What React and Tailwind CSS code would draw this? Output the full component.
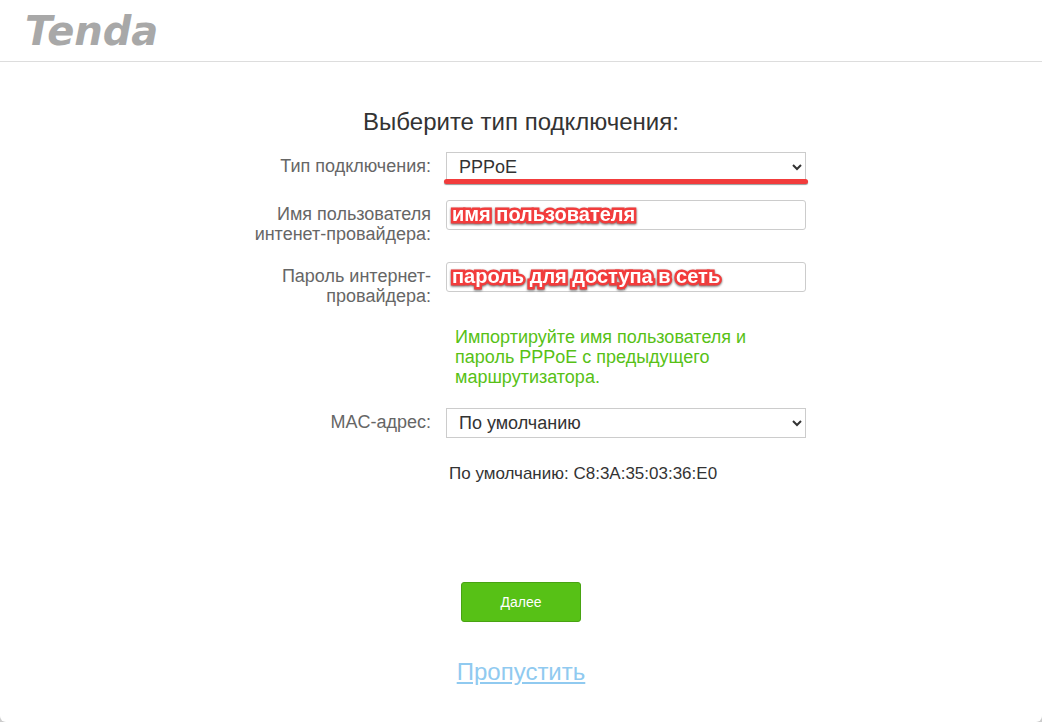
import { useState } from "react"

const CONNECTION_TYPES = ["PPPoE", "Динамический IP", "Статический IP"]
const MAC_OPTIONS = ["По умолчанию", "Клонировать MAC", "Вручную"]

const DEFAULT_MAC = "C8:3A:35:03:36:E0"

const selectClass = "block h-[30px] w-full border border-[#ccc] bg-white pr-px pl-2 text-lg leading-5 text-[#333] outline-none"
const inputClass = "block h-[30px] w-full rounded-[3px] border border-[#ccc] bg-white px-3 text-lg leading-5 text-[#333] outline-none"

function Row({ id, label, className, children }) {
    return (
        <div className={`flex items-start gap-[15px] ${className}`}>
            <label htmlFor={id} className="w-[195px] shrink-0 pt-1 text-right text-lg leading-5 text-[#666]">
                {label}
            </label>
            <div className="relative min-w-0 flex-1">{children}</div>
        </div>
    )
}

// white marker text with a red outline, lies over the field
function Callout({ children }) {
    return (
        <span className="pointer-events-none absolute top-1 left-[6px] text-xl leading-5 font-bold whitespace-nowrap text-white [-webkit-text-stroke:5px_#f23c3c] [paint-order:stroke_fill] [stroke-linejoin:round] [filter:drop-shadow(0_1px_1px_rgba(0,0,0,0.6))]">
            {children}
        </span>
    )
}

export default function App() {
    const [type, setType] = useState(CONNECTION_TYPES[0])
    const [mac, setMac] = useState(MAC_OPTIONS[0])
    const [user, setUser] = useState("")
    const [password, setPassword] = useState("")

    return (
        <div className="bg-[#ccc] font-['Liberation_Sans',Arial,sans-serif]">
            <div className="min-h-screen rounded-b-md bg-white">
                <header className="flex h-[62px] items-center border-b border-[#ddd] px-[25px]">
                    <span className="font-['DejaVu_Sans',sans-serif] text-[40px] leading-[60px] font-bold text-[#a8a8a8] italic">Tenda</span>
                </header>

                <main className="mx-auto flex max-w-[570px] flex-col pt-[45px]">
                    <h1 className="text-center text-2xl leading-[30px] text-[#333]">Выберите тип подключения:</h1>

                    <form onSubmit={e => e.preventDefault()} className="flex flex-col pt-[15px]">
                        <Row id="type" label="Тип подключения:" className="mb-[18px]">
                            <select id="type" value={type} onChange={e => setType(e.target.value)} className={selectClass}>
                                {CONNECTION_TYPES.map(t => <option key={t}>{t}</option>)}
                            </select>
                            <span className="pointer-events-none absolute -inset-x-[2px] -bottom-[2px] h-[5px] rounded-full bg-[#f23c3c] shadow-[0_1px_1px_rgba(0,0,0,0.4)]" />
                        </Row>

                        <Row id="user" label="Имя пользователя интенет-провайдера:" className="mb-[18px]">
                            <input id="user" type="text" value={user} onChange={e => setUser(e.target.value)} className={inputClass} />
                            {!user && <Callout>имя пользователя</Callout>}
                        </Row>

                        <Row id="password" label="Пароль интернет-провайдера:">
                            <input id="password" type="password" value={password} onChange={e => setPassword(e.target.value)} className={inputClass} />
                            {!password && <Callout>пароль для доступа в сеть</Callout>}
                        </Row>

                        <div className="pt-[21px] pr-[45px] pb-[21px] pl-[219px]">
                            <a href="#import" className="block text-lg leading-5 text-[#57c116]">
                                Импортируйте имя пользователя и пароль PPPoE с предыдущего маршрутизатора.
                            </a>
                        </div>

                        <Row id="mac" label="MAC-адрес:">
                            <select id="mac" value={mac} onChange={e => setMac(e.target.value)} className={selectClass}>
                                {MAC_OPTIONS.map(m => <option key={m}>{m}</option>)}
                            </select>
                        </Row>

                        <p className="pt-[26px] pl-[213px] text-[17px] leading-5 text-[#333]">По умолчанию: {DEFAULT_MAC}</p>

                        <button type="submit" className="mx-auto mt-[98px] h-10 w-[120px] rounded-[3px] border border-[#48a312] bg-[#57c116] text-sm text-white">
                            Далее
                        </button>
                    </form>

                    <a href="#skip" className="mx-auto mt-[35px] text-2xl leading-[30px] text-[#90caf0] underline">Пропустить</a>
                </main>
            </div>
        </div>
    )
}
